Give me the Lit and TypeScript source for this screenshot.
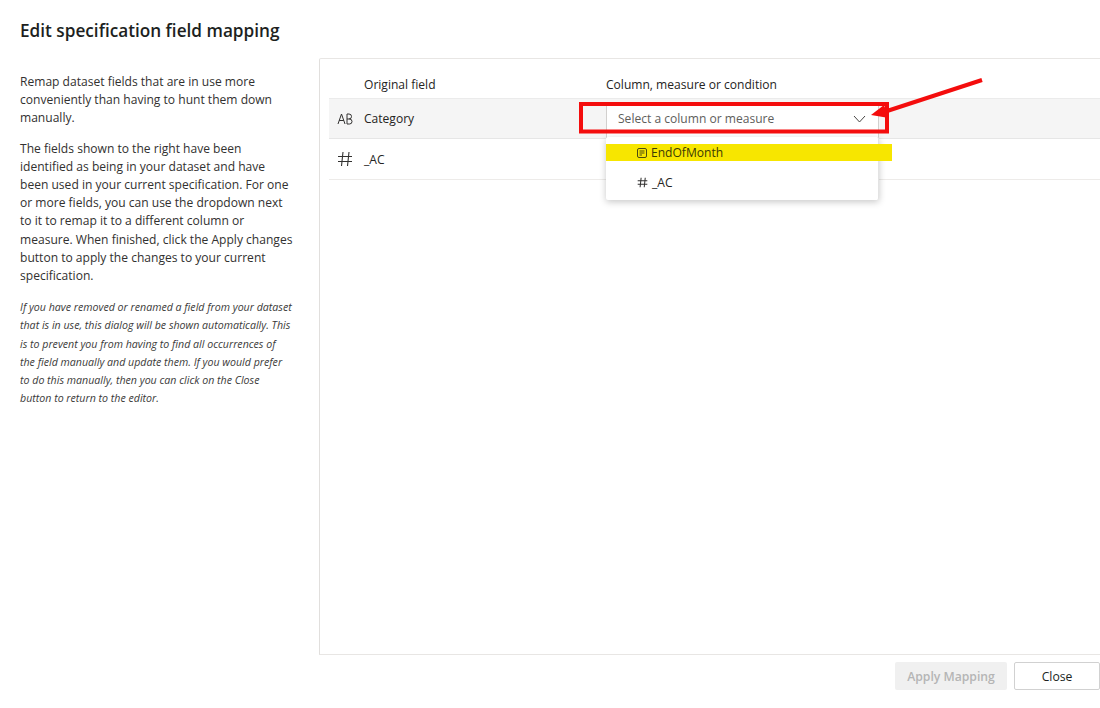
import { LitElement, html, css } from 'lit';
import { customElement } from 'lit/decorators.js';

@customElement('app-root')
export class AppRoot extends LitElement {
  static override styles = css`
    :host {
      display: flex;
      flex-direction: column;
      position: relative;
      width: 1100px;
      height: 708px;
      overflow: hidden;
      background: #fff;
      color: #252423;
      font-family: "Open Sans", "Noto Sans", sans-serif;
      font-size: 12.07px;
    }

    h1 {
      margin: 0;
      padding: 20px 20px 0;
      height: 58px;
      box-sizing: border-box;
      font-size: 17.2px;
      line-height: 22px;
      font-weight: 600;
      color: #201f1e;
    }

    .main {
      display: flex;
      height: 597px;
    }

    .help {
      width: 319px;
      flex: none;
      box-sizing: border-box;
      padding: 15px 20px 0;
      line-height: 18.2px;
      color: #323130;
    }

    .help p {
      margin: 0 0 13px;
      white-space: nowrap;
    }

    .help p:first-child {
      margin-bottom: 12px;
    }

    .help .note {
      font-size: 10.63px;
      font-style: italic;
      color: #3b3a39;
    }

    .panel {
      flex: 1;
      box-sizing: border-box;
      padding: 12px 0 0 9px;
      border-left: 1px solid #e1dfdd;
      border-top: 1px solid #e8e6e4;
      border-bottom: 1px solid #e8e6e4;
      border-top-left-radius: 2px;
    }

    .row {
      display: grid;
      grid-template-columns: 35px 242px 1fr;
      align-items: center;
      box-sizing: border-box;
      height: 41px;
      border-bottom: 1px solid #edebe9;
    }

    .row.head {
      height: 27px;
      border-bottom: none;
    }

    .row.active {
      background: #f5f5f5;
      border-top: 1px solid #ebebeb;
      border-bottom: 1px solid #e6e6e6;
    }

    .row svg {
      margin-left: 8px;
      display: block;
    }

    .select {
      align-self: end;
      display: flex;
      align-items: center;
      justify-content: space-between;
      box-sizing: border-box;
      width: 273px;
      height: 35px;
      padding: 0 12px 4px 11px;
      background: #fff;
      border-left: 1px solid #d2d0ce;
      border-right: 1px solid #d2d0ce;
      color: #605e5c;
    }

    .select svg {
      margin: 0;
    }

    .menu {
      position: absolute;
      left: 606px;
      top: 137px;
      width: 273px;
      height: 63px;
      box-sizing: border-box;
      padding-top: 30px;
      background: #fff;
      border-right: 1px solid #e3e3e3;
      border-radius: 2px;
      box-shadow: 0 2px 7px rgba(0, 0, 0, 0.22);
    }

    .menu-item {
      display: flex;
      align-items: center;
      gap: 4px;
      height: 31px;
      padding-left: 31px;
      box-sizing: border-box;
    }

    .highlight {
      position: absolute;
      left: 606px;
      top: 144px;
      width: 286px;
      height: 17px;
      display: flex;
      align-items: center;
      gap: 4px;
      box-sizing: border-box;
      padding-left: 31px;
      background: #f7e600;
      color: #3b3a05;
    }

    .callout {
      position: absolute;
      left: 0;
      top: 0;
      pointer-events: none;
    }

    .footer {
      display: flex;
      justify-content: flex-end;
      gap: 7px;
      padding-top: 7px;
    }

    button {
      height: 28px;
      box-sizing: border-box;
      border-radius: 2px;
      font: inherit;
      font-size: 12.2px;
      padding: 1px 0 0;
    }

    .apply {
      width: 112px;
      border: none;
      font-weight: 600;
      background: #f0f0f0;
      color: #b5b5b5;
    }

    .close {
      width: 86px;
      border: 1px solid #d1d1d1;
      font-weight: 500;
      background: #fff;
      color: #201f1e;
    }
  `;

  override render() {
    return html`
      <h1>Edit specification field mapping</h1>
      <div class="main">
        <div class="help">
          <p>Remap dataset fields that are in use more<br>conveniently than having to hunt them down<br>manually.</p>
          <p>The fields shown to the right have been<br>identified as being in your dataset and have<br>been used in your current specification. For one<br>or more fields, you can use the dropdown next<br>to it to remap it to a different column or<br>measure. When finished, click the Apply changes<br>button to apply the changes to your current<br>specification.</p>
          <p class="note">If you have removed or renamed a field from your dataset<br>that is in use, this dialog will be shown automatically. This<br>is to prevent you from having to find all occurrences of<br>the field manually and update them. If you would prefer<br>to do this manually, then you can click on the Close<br>button to return to the editor.</p>
        </div>
        <div class="panel">
          <div class="row head">
            <span></span>
            <span>Original field</span>
            <span>Column, measure or condition</span>
          </div>
          <div class="row active">
            <svg width="16" height="14" viewBox="0 0 16 14" fill="none" stroke="#323130" stroke-width="1">
              <path d="M1 12 L4.5 2 L8 12 M2.2 8.5 H6.8" />
              <path d="M10 2 V12 H12.5 A2.5 2.5 0 0 0 12.5 7 H10 M10 2 H12 A2.5 2.5 0 0 1 12 7" />
            </svg>
            <span>Category</span>
            <div class="select">
              <span>Select a column or measure</span>
              <svg width="13" height="8" viewBox="0 0 13 8" fill="none" stroke="#484644" stroke-width="1">
                <path d="M1 1 L6.5 7 L12 1" />
              </svg>
            </div>
          </div>
          <div class="row">
            ${this.hash(16, 1.1)}
            <span>_AC</span>
            <span></span>
          </div>
        </div>
      </div>
      <div class="footer">
        <button class="apply">Apply Mapping</button>
        <button class="close">Close</button>
      </div>

      <div class="menu">
        <div class="menu-item">
          ${this.hash(11, 1.5)}
          <span>_AC</span>
        </div>
      </div>
      <div class="highlight">
        <svg width="10" height="10" viewBox="0 0 10 10" fill="none" stroke="#4a4a10" stroke-width="1">
          <rect x="0.5" y="0.5" width="9" height="9" rx="1.5" />
          <path d="M2.5 3 H7.5 M2.5 5 H7.5 M2.5 7 H5" />
        </svg>
        <span>EndOfMonth</span>
      </div>

      <svg class="callout" width="1100" height="708" viewBox="0 0 1100 708" fill="none">
        <rect x="581" y="104" width="306" height="27.5" stroke="#f40d0d" stroke-width="4" />
        <path d="M982 80 L884 112" stroke="#f40d0d" stroke-width="4" />
        <path d="M871 115 L884 105 L889 118 Z" fill="#f40d0d" />
      </svg>
    `;
  }

  private hash(size: number, stroke: number) {
    return html`<svg width=${size} height=${size} viewBox="0 0 16 16" fill="none" stroke="#323130" stroke-width=${stroke}>
      <path d="M6 1 L4.5 15 M12 1 L10.5 15 M1 5.5 H15 M1 10.5 H15" />
    </svg>`;
  }
}
